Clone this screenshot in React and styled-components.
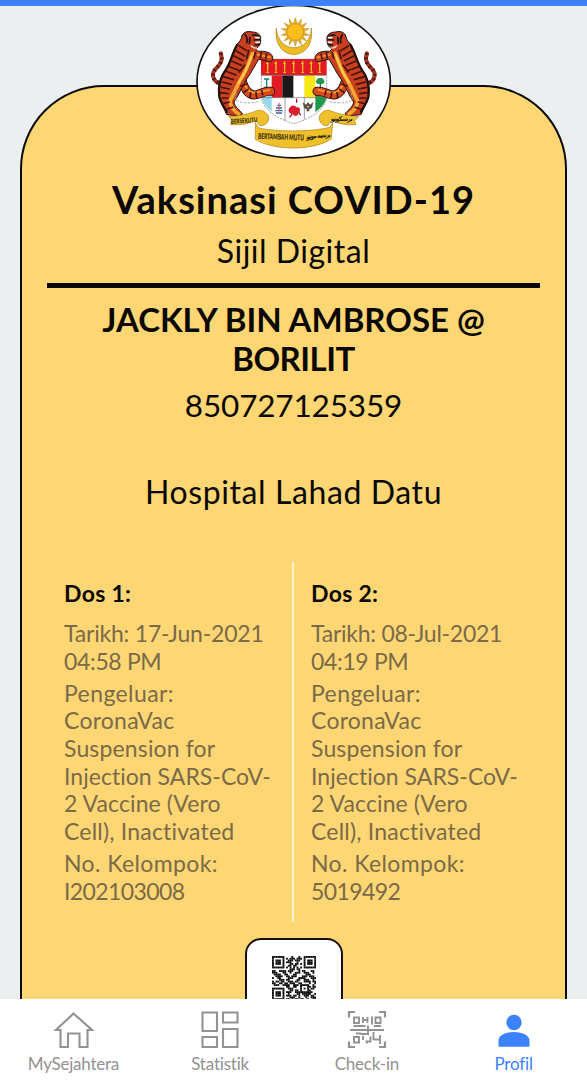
import React from 'react';
import styled, { createGlobalStyle } from 'styled-components';

const Global = createGlobalStyle`
  * { box-sizing: border-box; }
  body { margin: 0; background: #ebeff0; font-family: Lato, "Open Sans", sans-serif; }
`;

const Screen = styled.div`
  height: 1080px;
  display: flex;
  flex-direction: column;
  overflow: hidden;
`;

const TopBar = styled.div`
  height: 6px;
  flex: none;
  background: #3b82fc;
`;

const Content = styled.main`
  flex: 1;
  min-height: 0;
  overflow: hidden;
  padding: 79px 20px 0;
`;

const Card = styled.section`
  position: relative;
  height: 1100px;
  border: 2px solid #0c0a06;
  border-radius: 84px;
  background: #fed774;
  padding: 88px 25px 0;
  display: flex;
  flex-direction: column;
  align-items: center;
  color: #0a0804;
`;

const Crest = styled.svg`
  position: absolute;
  left: 174px;
  top: -82px;
`;

const Line = styled.div`
  font-size: ${(p) => p.$size}px;
  line-height: ${(p) => p.$lh}px;
  font-weight: ${(p) => (p.$bold ? 700 : 400)};
  letter-spacing: ${(p) => p.$ls || 0}px;
  white-space: nowrap;
`;

const Place = styled(Line)`
  margin-top: 36.5px;
`;

const Rule = styled.hr`
  width: 493px;
  height: 5px;
  margin: 3.5px 0 12px;
  border: 0;
  background: #0a0804;
`;

const Doses = styled.div`
  align-self: stretch;
  height: 360px;
  margin-top: 47px;
  display: flex;
`;

const Dose = styled.article`
  width: 245px;
  padding: 13px 0 0 17px;
  color: #7a6a48;
  & + & { border-left: 2px solid #fff3cf; }
`;

const DoseTitle = styled(Line)`
  color: #0a0804;
  margin-bottom: 9px;
`;

const Field = styled.div`
  margin-bottom: 4.6px;
`;

const QrBox = styled.div`
  width: 98px;
  height: 120px;
  margin-top: 16px;
  border: 2px solid #14110c;
  border-radius: 16px;
  background: #fff;
  display: flex;
  justify-content: center;
  padding-top: 16px;
`;

const Nav = styled.nav`
  height: 81px;
  flex: none;
  background: #fff;
  display: grid;
  grid-template-columns: repeat(4, 1fr);
`;

const Tab = styled.div`
  display: flex;
  flex-direction: column;
  align-items: center;
  padding-top: 11px;
  color: ${(p) => (p.$active ? '#3b82fc' : '#929292')};
`;

const TabIcon = styled.svg`
  display: block;
  margin-bottom: 3px;
`;

const QR = [
  '1111111000010001001111111',
  '1000001010111011101000001',
  '1011101001110111001011101',
  '1011101011100010001011101',
  '1011101000110110101011101',
  '1000001001101100001000001',
  '1111111010101010101111111',
  '0000000000111011000000000',
  '1100111101110001011000110',
  '1110001100100111001110010',
  '0111100110001100000111000',
  '0011110011011100011101110',
  '1001100001110001111000111',
  '0000111011000011001110010',
  '1011011001110110001111011',
  '1100110110111001100001001',
  '0111001111001110111110010',
  '0000000011001100100011011',
  '1111111001110000101010110',
  '1000001000110110100011000',
  '1011101011100111111111100',
  '1011101001000011011111001',
  '1011101011101101001110110',
  '1000001000111001000100111',
  '1111111011010110110010011',
];

function QrCode() {
  return (
    <svg width="44" height="44" viewBox="0 0 25 25">
      {QR.map((row, y) =>
        [...row].map((c, x) => (c === '1' ? <rect key={`${x}-${y}`} x={x} y={y} width="1.05" height="1.05" fill="#0c0c0c" /> : null))
      )}
    </svg>
  );
}

function Tiger() {
  return (
    <g strokeLinecap="round" strokeLinejoin="round" fill="none">
      <path d="M98 250 C70 252 62 222 76 208 C92 192 100 180 92 160" stroke="#a3331f" strokeWidth="12" />
      <path d="M98 250 C70 252 62 222 76 208 C92 192 100 180 92 160" stroke="#3c1512" strokeWidth="12" strokeDasharray="4 10" strokeLinecap="butt" />
      <path d="M152 225 C160 262 172 290 200 284 C216 280 226 272 242 274" stroke="#2a120c" strokeWidth="27" />
      <path d="M152 225 C160 262 172 290 200 284 C216 280 226 272 242 274" stroke="#d94a1e" strokeWidth="22" />
      <path d="M160 240 C168 270 182 284 206 276 L238 270" stroke="#f4a431" strokeWidth="5" />
      <path d="M156 108 C158 98 170 92 186 96 C204 96 214 106 212 118 C212 132 208 142 196 146 L204 154 C226 152 246 158 248 172 C250 186 238 188 228 182 L206 178 C194 196 186 216 168 240 C156 262 146 286 132 306 C134 322 150 330 158 342 L150 348 L110 344 C106 330 92 312 87 290 C82 256 92 226 108 208 C122 186 128 150 142 132 C150 124 154 118 156 108Z" fill="#c8401f" stroke="#1f120d" strokeWidth="3" />
      <path d="M188 160 C176 186 170 212 152 238 C140 260 130 282 120 304 C122 322 134 334 146 342" stroke="#f6a62f" strokeWidth="11" />
      <path d="M186 166 C176 194 164 222 146 248" stroke="#f8cf58" strokeWidth="5" />
      <path d="M204 164 L240 172" stroke="#f08a2a" strokeWidth="7" />
      <path d="M142 134 C128 156 122 188 108 208 C90 232 84 262 88 290 C92 308 104 322 110 336" stroke="#21120e" strokeWidth="7" />
      <path d="M148 138l22 14M138 152l26 16M132 168l28 14M126 184l28 12M118 200l28 11M108 214l30 11M100 230l30 9M96 246l28 7M94 262l24 5M92 278l22 3M96 294l18 0M102 310l16 -4M110 328l18 -6M176 152l-6 24M196 158l-4 16M214 158l-3 16M230 162l-3 14M164 196l-16 20M152 258l18 -6M160 278l14 -10M180 292l2 -14M200 292l-2 -14M218 284l-3 -12" stroke="#47130d" strokeWidth="5" />
      <path d="M188 106c8 -4 14 0 20 4M192 120l16 -2M196 134c6 2 10 0 13 -4M166 104c4 6 8 14 4 24M180 112l-2 18" stroke="#1a1412" strokeWidth="5" />
      <path d="M198 113h9M198 127h10" stroke="#fff" strokeWidth="5" />
      <path d="M184 138c6 6 10 7 15 6" stroke="#f4ead8" strokeWidth="4" />
      <path d="M140 268 L136 300 C150 306 168 314 208 304" stroke="#9c9f9a" strokeWidth="2.5" strokeDasharray="6 6" />
    </g>
  );
}

const CHIEF_KRIS = [233, 258, 284, 311, 338, 364, 389];

function Emblem() {
  const rays = Array.from({ length: 14 }, (_, i) => {
    const a = (i * Math.PI * 2) / 14 - Math.PI / 2;
    const at = (r, d) => `${316 + r * Math.cos(a + d)} ${96 + r * Math.sin(a + d)}`;
    return `M${at(25, -0.2)}L${at(43, 0)}L${at(25, 0.2)}Z`;
  }).join('');
  return (
    <Crest width="196" height="156" viewBox="18 15 588 468">
      <ellipse cx="311" cy="245" rx="290" ry="228.500" fill="#fff" stroke="#15120f" strokeWidth="5" />
      <path d="M259 84 C246 190 378 190 364 84 C362 162 264 164 259 84Z" fill="#eebb22" stroke="#a8801a" strokeWidth="2" />
      <circle cx="316" cy="96" r="27" fill="#f6bd1c" />
      <path d={rays} fill="#eeb21c" stroke="#b07f14" strokeWidth="1.500" />
      <path d="M215 226 H410 V290 C404 334 350 360 311 371 C272 360 221 334 215 290Z" fill="#fff" />
      <path d="M213 178 H410 V226 H213Z" fill="#e31b23" />
      <path d="M245 226h32v67h-32z" fill="#e31b23" />
      <path d="M277 226h33v67h-33z" fill="#1b1819" />
      <path d="M343 226h33v67h-33z" fill="#f9e616" />
      <path d="M215 266h30v6h-30z" fill="#58aa79" />
      <path d="M215 271h30v10h-30z" fill="#f7dc3a" />
      <path d="M215 281h30v53c-16 -12 -28 -26 -30 -44z" fill="#94d9ee" />
      <path d="M376 268h34v22c-3 18 -16 34 -34 46z" fill="#1f9a4d" />
      <path d="M222 237h16M230 237v25M221 262h18" stroke="#20816d" strokeWidth="4" />
      <path d="M380 240c4 -8 18 -8 22 0 4 8 -2 12 -8 12h-8c-8 0 -10 -8 -6 -12z" fill="#1d9b4d" />
      <path d="M391 250v16" stroke="#2f6b3a" strokeWidth="4" />
      <path d="M213 226H410M215 293H408M285 293V362M343 293V358" stroke="#6c6c6c" strokeWidth="2" fill="none" />
      {CHIEF_KRIS.map((x) => (
        <path key={x} d={`M${x} 184v30M${x - 5} 190h8M${x - 4} 217h8`} stroke="#f3bf25" strokeWidth="4" />
      ))}
      <path d="M213 178h197" stroke="#8f1318" strokeWidth="2" />
      <path d="M214 226v64c4 44 60 70 97 81 40 -11 96 -37 99 -81v-64" fill="none" stroke="#8a9088" strokeWidth="2.500" strokeDasharray="6 3" />
      <path d="M256 332h22M258 324h18M262 316h11M258 339h18" stroke="#3c63ae" strokeWidth="4" />
      <path d="M267 308v26" stroke="#c7525a" strokeWidth="3" />
      <path d="M300 322c8 -10 16 -4 20 0 10 -2 14 10 6 16 -2 12 -14 12 -18 4 -12 0 -16 -12 -8 -20z" fill="#dc1d2e" />
      <path d="M320 296v12M306 342l-7 10M326 336l6 10" stroke="#99202a" strokeWidth="4" />
      <path d="M338 306l10 8 6 -8 6 8 10 -8 -4 18 -8 4 0 6 -8 0 0 -6 -8 -4z" fill="#54504c" />
      <path d="M350 318l4 7 4 -7z" fill="#e9c22d" />
      <Tiger />
      <g transform="translate(623 0) scale(-1 1)"><Tiger /></g>
      <g fill="#f0c02a" stroke="#a98018" strokeWidth="2">
        <path d="M116 350 C150 348 184 340 200 332 C216 326 232 340 236 350 C238 366 226 380 208 376 C204 368 200 364 196 362 C176 372 150 376 122 374 L128 362Z" />
        <path d="M506 350 C472 348 438 340 422 332 C406 326 390 340 388 350 C386 366 398 380 414 376 C418 368 422 364 426 362 C446 372 472 376 498 374 L494 362Z" />
        <path d="M196 368 L206 384 C260 396 364 396 420 382 L428 368 L424 416 C376 452 252 454 196 418Z" />
      </g>
      <g fontFamily="Lato, sans-serif" fontSize="20" fontWeight="900" fill="#2e260c">
        <text x="122" y="369" textLength="80" lengthAdjust="spacingAndGlyphs" transform="rotate(-4 160 362)">BERSEKUTU</text>
        <text x="204" y="419" fontSize="24" textLength="138" lengthAdjust="spacingAndGlyphs" transform="rotate(2 270 412)">BERTAMBAH MUTU</text>
        <text x="422" y="414" textLength="74" textAnchor="start" direction="rtl" fontFamily="DejaVu Sans" transform="rotate(-5 380 410)">برتمبه موتو</text>
        <text x="488" y="364" textLength="66" direction="rtl" fontFamily="DejaVu Sans">برسکوتو</text>
      </g>
    </Crest>
  );
}

const maker = [
  ['Pengeluar:', 0.4],
  ['CoronaVac', 0.25],
  ['Suspension for', 0.15],
  ['Injection SARS-CoV-', 0.03],
  ['2 Vaccine (Vero', 0.1],
  ['Cell), Inactivated', 0.2],
];
const doses = [
  { title: 'Dos 1:', date: [['Tarikh: 17-Jun-2021', -0.2], ['04:58 PM', -0.35]], batch: 'I202103008' },
  { title: 'Dos 2:', date: [['Tarikh: 08-Jul-2021', -0.25], ['04:19 PM', -0.35]], batch: '5019492' },
];

const Lines = ({ items }) => (
  <Field>
    {items.map(([text, spacing]) => <Line key={text} $size={23} $lh={27.6} $ls={spacing}>{text}</Line>)}
  </Field>
);

export default function App() {
  return (
    <Screen>
      <Global />
      <TopBar />
      <Content>
        <Card>
          <Emblem />
          <Line $size={38} $lh={48} $bold $ls={1}>Vaksinasi COVID-19</Line>
          <Line $size={32} $lh={56} $ls={0.5}>Sijil Digital</Line>
          <Rule />
          <Line $size={33} $lh={39} $bold>JACKLY BIN AMBROSE @</Line>
          <Line $size={33} $lh={39} $bold $ls={-0.5}>BORILIT</Line>
          <Line $size={31.5} $lh={55} $ls={-0.15}>850727125359</Line>
          <Place $size={32} $lh={46} $ls={0.6}>Hospital Lahad Datu</Place>
          <Doses>
            {doses.map((d) => (
              <Dose key={d.title}>
                <DoseTitle $size={23} $lh={36} $bold $ls={0.3}>{d.title}</DoseTitle>
                <Lines items={d.date} />
                <Lines items={maker} />
                <Lines items={[['No. Kelompok:', 0.4], [d.batch, -0.6]]} />
              </Dose>
            ))}
          </Doses>
          <QrBox><QrCode /></QrBox>
        </Card>
      </Content>
      <Nav>
        <Tab>
          <TabIcon width="44" height="40" viewBox="0 0 44 40" fill="none" stroke="currentColor" strokeWidth="2.100">
            <path d="M22.500 3.500 L5 20 H9.500 V37 H17 V23.500 H28.500 V37 H36.500 V20 H41 Z" />
          </TabIcon>
          <Line $size={17} $lh={21} $ls={-0.25}>MySejahtera</Line>
        </Tab>
        <Tab>
          <TabIcon width="44" height="40" viewBox="0 0 44 40" fill="none" stroke="currentColor" strokeWidth="2.100">
            <path d="M4.500 2.500h14.500v18.500H4.500zM25 2.500h14.500v10H25zM4.500 27h14.500v10H4.500zM25 19h14.500v18H25z" />
          </TabIcon>
          <Line $size={17} $lh={21} $ls={-0.2}>Statistik</Line>
        </Tab>
        <Tab>
          <TabIcon width="44" height="40" viewBox="0 0 44 40" fill="none" stroke="currentColor" strokeWidth="2.200">
            <path d="M4 7.500V2h6M34 2h6v5.500M4 31.500V37h6M34 37h6v-5.500M5 20h34" />
            <path d="M9 7.500h5v5.500H9zM30.500 7.500h5V13h-5zM9 27h5v5.500H9zM18 7v6M18 10h5M22.500 7v6M27 6.500v8M8.500 16h12M23 15.500v9M29 16h7M11 23.500h5M16 24h8M28.500 22v8M18 26v4M22 32v1.500M20.500 31.500h5v-5M28.500 29.500h7M35 25v9" strokeWidth="1.900" />
          </TabIcon>
          <Line $size={17} $lh={21} $ls={-0.2}>Check-in</Line>
        </Tab>
        <Tab $active>
          <TabIcon width="44" height="40" viewBox="0 0 44 40" fill="currentColor">
            <circle cx="22" cy="12.500" r="7.700" />
            <path d="M6.500 36.800 V30.500 C6.500 25.500 13 21.900 22 21.900 S37.500 25.500 37.500 30.500 V36.800Z" />
          </TabIcon>
          <Line $size={17} $lh={21} $ls={-0.2}>Profil</Line>
        </Tab>
      </Nav>
    </Screen>
  );
}
